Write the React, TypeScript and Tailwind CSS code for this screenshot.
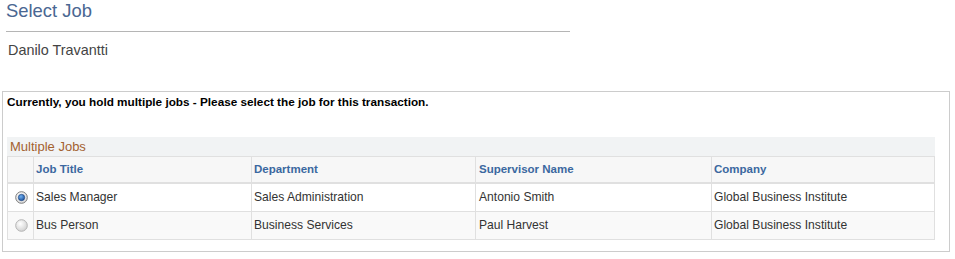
import React from "react";

const rows = [
  { title: "Sales Manager", dept: "Sales Administration", sup: "Antonio Smith", company: "Global Business Institute", selected: true },
  { title: "Bus Person", dept: "Business Services", sup: "Paul Harvest", company: "Global Business Institute", selected: false },
];

function Radio({ on }: { on: boolean }) {
  return (
    <svg width="13" height="13" viewBox="0 0 13 13">
      <defs>
        <radialGradient id={on ? "rgOn" : "rgOff"} cx="40%" cy="35%" r="70%">
          <stop offset="0%" stopColor="#ffffff" />
          <stop offset="100%" stopColor={on ? "#d6d6d6" : "#cfcfcf"} />
        </radialGradient>
        <radialGradient id="dot" cx="40%" cy="35%" r="70%">
          <stop offset="0%" stopColor="#6fb0f0" />
          <stop offset="100%" stopColor="#1a4f9a" />
        </radialGradient>
      </defs>
      <circle cx="6.5" cy="6.5" r="5.8" fill={`url(#${on ? "rgOn" : "rgOff"})`} stroke={on ? "#7d7d7d" : "#b4b4b4"} strokeWidth="1" />
      {on && <circle cx="6.5" cy="6.5" r="3.2" fill="url(#dot)" stroke="#1b3f78" strokeWidth="0.6" />}
    </svg>
  );
}

export default function App() {
  const cols = "grid grid-cols-[26px_218px_224px_236px_224px]";
  return (
    <div className="w-[955px] h-[259px] bg-white text-[#333333]" style={{ fontFamily: '"Liberation Sans", Arial, sans-serif' }}>
      <div className="pl-[6px] text-[18.4px] leading-[22px] text-[#4a6792]">Select Job</div>
      <div className="ml-[6px] mt-[9px] w-[564px] border-t border-[#b5b5b5]" />
      <div className="ml-[8px] mt-[9px] text-[14.4px] leading-[18px] text-[#444444]">Danilo Travantti</div>

      <div className="ml-[2px] mt-[32px] w-[948px] border border-[#cccccc] pl-[4px] pt-[3px] pb-[11px]">
        <div className="text-[11.75px] leading-[14px] font-bold text-black">
          Currently, you hold multiple jobs - Please select the job for this transaction.
        </div>
        <div className="mt-[28px] w-[928px]">
          <div className="h-[19px] bg-[#f1f3f4] pl-[3px] text-[13px] leading-[19px] text-[#a3612f]">Multiple Jobs</div>
          <div className={`${cols} h-[28px] border-t border-b-2 border-x border-[#e0e0e0] bg-[#f7f7f7] text-[11.5px] font-bold text-[#3b68a0]`}>
            <div className="border-r border-[#e0e0e0]" />
            <div className="flex items-center pl-[2px] border-r border-[#e0e0e0]">Job Title</div>
            <div className="flex items-center pl-[2px] border-r border-[#e0e0e0]">Department</div>
            <div className="flex items-center pl-[3px] border-r border-[#e0e0e0]">Supervisor Name</div>
            <div className="flex items-center pl-[2px]">Company</div>
          </div>
          {rows.map((r, i) => (
            <div
              key={r.title}
              className={`${cols} h-[28px] border-b border-x border-[#e0e0e0] text-[12.1px] ${i % 2 === 0 ? "bg-white" : "bg-[#f9f9f9]"}`}
            >
              <div className="flex items-center justify-center pl-[1px] border-r border-[#e0e0e0]">
                <Radio on={r.selected} />
              </div>
              <div className="flex items-center pl-[2px] pb-[1px] border-r border-[#e0e0e0]">{r.title}</div>
              <div className="flex items-center pl-[2px] pb-[1px] border-r border-[#e0e0e0]">{r.dept}</div>
              <div className="flex items-center pl-[3px] pb-[1px] border-r border-[#e0e0e0]">{r.sup}</div>
              <div className="flex items-center pl-[2px] pb-[1px]">{r.company}</div>
            </div>
          ))}
        </div>
      </div>
    </div>
  );
}
